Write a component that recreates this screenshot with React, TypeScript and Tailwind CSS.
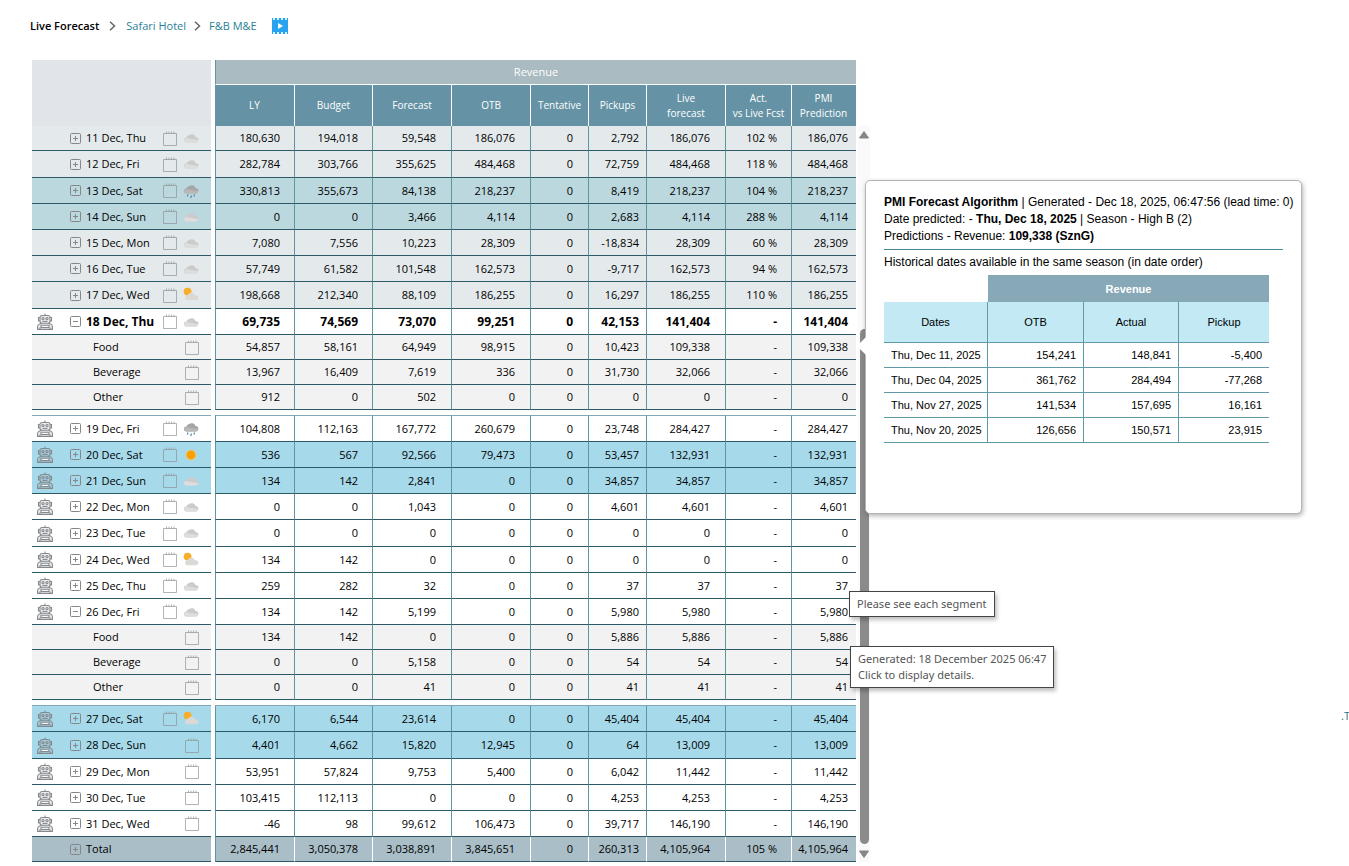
import React from "react";

type Kind = "past" | "pastWeekend" | "today" | "future" | "weekend" | "segment" | "total";
type Weather = "cloud" | "rain" | "sun" | "partly";

interface Row {
  label: string;
  kind: Kind;
  height: string;
  values: string[];
  weather?: Weather;
  robot?: boolean;
  open?: boolean;
  afterGap?: boolean;
}

const REGULAR = "h-[26px]";
const TALL = "h-[27px]";
const SHORT = "h-[25px]";

const sections: Row[][] = [
  [
    { label: "11 Dec, Thu", kind: "past", height: SHORT, weather: "cloud", values: ["180,630", "194,018", "59,548", "186,076", "0", "2,792", "186,076", "102 %", "186,076"] },
    { label: "12 Dec, Fri", kind: "past", height: TALL, weather: "cloud", values: ["282,784", "303,766", "355,625", "484,468", "0", "72,759", "484,468", "118 %", "484,468"] },
    { label: "13 Dec, Sat", kind: "pastWeekend", height: REGULAR, weather: "rain", values: ["330,813", "355,673", "84,138", "218,237", "0", "8,419", "218,237", "104 %", "218,237"] },
    { label: "14 Dec, Sun", kind: "pastWeekend", height: REGULAR, weather: "cloud", values: ["0", "0", "3,466", "4,114", "0", "2,683", "4,114", "288 %", "4,114"] },
    { label: "15 Dec, Mon", kind: "past", height: REGULAR, weather: "cloud", values: ["7,080", "7,556", "10,223", "28,309", "0", "-18,834", "28,309", "60 %", "28,309"] },
    { label: "16 Dec, Tue", kind: "past", height: REGULAR, weather: "cloud", values: ["57,749", "61,582", "101,548", "162,573", "0", "-9,717", "162,573", "94 %", "162,573"] },
    { label: "17 Dec, Wed", kind: "past", height: TALL, weather: "partly", values: ["198,668", "212,340", "88,109", "186,255", "0", "16,297", "186,255", "110 %", "186,255"] },
    { label: "18 Dec, Thu", kind: "today", height: REGULAR, weather: "cloud", robot: true, open: true, values: ["69,735", "74,569", "73,070", "99,251", "0", "42,153", "141,404", "-", "141,404"] },
    { label: "Food", kind: "segment", height: SHORT, values: ["54,857", "58,161", "64,949", "98,915", "0", "10,423", "109,338", "-", "109,338"] },
    { label: "Beverage", kind: "segment", height: SHORT, values: ["13,967", "16,409", "7,619", "336", "0", "31,730", "32,066", "-", "32,066"] },
    { label: "Other", kind: "segment", height: SHORT, values: ["912", "0", "502", "0", "0", "0", "0", "-", "0"] },
  ],
  [
    { label: "19 Dec, Fri", kind: "future", height: TALL, afterGap: true, weather: "rain", robot: true, values: ["104,808", "112,163", "167,772", "260,679", "0", "23,748", "284,427", "-", "284,427"] },
    { label: "20 Dec, Sat", kind: "weekend", height: REGULAR, weather: "sun", robot: true, values: ["536", "567", "92,566", "79,473", "0", "53,457", "132,931", "-", "132,931"] },
    { label: "21 Dec, Sun", kind: "weekend", height: REGULAR, weather: "cloud", robot: true, values: ["134", "142", "2,841", "0", "0", "34,857", "34,857", "-", "34,857"] },
    { label: "22 Dec, Mon", kind: "future", height: REGULAR, weather: "cloud", robot: true, values: ["0", "0", "1,043", "0", "0", "4,601", "4,601", "-", "4,601"] },
    { label: "23 Dec, Tue", kind: "future", height: TALL, weather: "cloud", robot: true, values: ["0", "0", "0", "0", "0", "0", "0", "-", "0"] },
    { label: "24 Dec, Wed", kind: "future", height: REGULAR, weather: "partly", robot: true, values: ["134", "142", "0", "0", "0", "0", "0", "-", "0"] },
    { label: "25 Dec, Thu", kind: "future", height: REGULAR, weather: "cloud", robot: true, values: ["259", "282", "32", "0", "0", "37", "37", "-", "37"] },
    { label: "26 Dec, Fri", kind: "future", height: REGULAR, weather: "cloud", robot: true, open: true, values: ["134", "142", "5,199", "0", "0", "5,980", "5,980", "-", "5,980"] },
    { label: "Food", kind: "segment", height: SHORT, values: ["134", "142", "0", "0", "0", "5,886", "5,886", "-", "5,886"] },
    { label: "Beverage", kind: "segment", height: SHORT, values: ["0", "0", "5,158", "0", "0", "54", "54", "-", "54"] },
    { label: "Other", kind: "segment", height: SHORT, values: ["0", "0", "41", "0", "0", "41", "41", "-", "41"] },
  ],
  [
    { label: "27 Dec, Sat", kind: "weekend", height: TALL, afterGap: true, weather: "partly", robot: true, values: ["6,170", "6,544", "23,614", "0", "0", "45,404", "45,404", "-", "45,404"] },
    { label: "28 Dec, Sun", kind: "weekend", height: TALL, robot: true, values: ["4,401", "4,662", "15,820", "12,945", "0", "64", "13,009", "-", "13,009"] },
    { label: "29 Dec, Mon", kind: "future", height: REGULAR, robot: true, values: ["53,951", "57,824", "9,753", "5,400", "0", "6,042", "11,442", "-", "11,442"] },
    { label: "30 Dec, Tue", kind: "future", height: REGULAR, robot: true, values: ["103,415", "112,113", "0", "0", "0", "4,253", "4,253", "-", "4,253"] },
    { label: "31 Dec, Wed", kind: "future", height: REGULAR, robot: true, values: ["-46", "98", "99,612", "106,473", "0", "39,717", "146,190", "-", "146,190"] },
    { label: "Total", kind: "total", height: SHORT, values: ["2,845,441", "3,050,378", "3,038,891", "3,845,651", "0", "260,313", "4,105,964", "105 %", "4,105,964"] },
  ],
];

const background: Record<Kind, string> = {
  past: "bg-[#e4eaec]",
  pastWeekend: "bg-[#bcd8df]",
  today: "bg-white text-[12px] font-bold",
  future: "bg-white",
  weekend: "bg-[#a6daeb]",
  segment: "bg-[#f2f2f2]",
  total: "bg-[#a9bec7]",
};

const columns: { title: string[]; width: string; pad: string }[] = [
  { title: ["LY"], width: "w-[80px]", pad: "pr-[14px]" },
  { title: ["Budget"], width: "w-[78px]", pad: "pr-[14px]" },
  { title: ["Forecast"], width: "w-[79px]", pad: "pr-[15px]" },
  { title: ["OTB"], width: "w-[79px]", pad: "pr-[15px]" },
  { title: ["Tentative"], width: "w-[58px]", pad: "pr-[15px]" },
  { title: ["Pickups"], width: "w-[58px]", pad: "pr-[7px]" },
  { title: ["Live", "forecast"], width: "w-[79px]", pad: "pr-[15px]" },
  { title: ["Act.", "vs Live Fcst"], width: "w-[66px]", pad: "pr-[14px]" },
  { title: ["PMI", "Prediction"], width: "w-[64px]", pad: "pr-2" },
];

function Robot() {
  return (
    <svg className="h-[17px] w-4 shrink-0" viewBox="0 0 16 17" fill="none" stroke="#85898d" strokeWidth="1.100">
      <path d="M8 2.800V.5" />
      <path d="M5 2.500h6a2 2 0 0 1 2 2v3.700a2 2 0 0 1-2 2H5a2 2 0 0 1-2-2V4.500a2 2 0 0 1 2-2z" fill="#85898d" fillOpacity=".15" />
      <path d="M2.800 4.500H1.500v3.400h1.300M13.200 4.500h1.300v3.400h-1.300" />
      <circle cx="6" cy="5.600" r="1.100" />
      <circle cx="10" cy="5.600" r="1.100" />
      <path d="M5.500 8.400h5" />
      <path d="M4.500 10.300 2.600 10.900Q.6 11.600.6 13.500v2.900h14.800v-2.900q0-1.900-2-2.600l-1.900-.6" fill="#85898d" fillOpacity=".15" />
      <path d="M4 12.300h8v2.200H4z" fill="#f4f5f5" />
      <path d="M3 14.500v1.800M13 14.500v1.800" />
    </svg>
  );
}

function Calendar() {
  return (
    <svg className="h-[15px] w-[14px] shrink-0" viewBox="0 0 14 15" fill="none" stroke="#8c9092" strokeOpacity=".68">
      <path d="M.5 2.500h13v12H.5z" />
      <path d="M3.500.5v2M6 .5v2M8.500.5v2M11 .5v2" />
    </svg>
  );
}

function Cloud({ dark = false }: { dark?: boolean }) {
  return (
    <g>
      <path
        d="M3.200 12.500A2.700 2.700 0 0 1 .8 9.900 2.600 2.600 0 0 1 3.500 7.500 3.300 3.300 0 0 1 6.100 5.100 4 4 0 0 1 12.500 7 2.900 2.900 0 0 1 15.400 9.800 2.700 2.700 0 0 1 12.900 12.500z"
        fill={dark ? "#a6a5a7" : "#cbcbcc"}
      />
      <path
        d="M3.200 12.500A2.600 2.600 0 0 1 .8 10 2.400 2.400 0 0 1 3.500 8.200Q5.500 7.600 6.800 9.300 9.500 8.200 11 9.800 13.200 9 15.300 10.400A2.700 2.700 0 0 1 12.900 12.500z"
        fill={dark ? "#b9b7b8" : "#dedddd"}
      />
    </g>
  );
}

function WeatherIcon({ type }: { type: Weather }) {
  return (
    <svg className="h-4 w-4 shrink-0" viewBox="0 0 16 16">
      {type === "sun" && (
        <>
          <circle cx="8" cy="8" r="5.600" fill="#fbc65a" opacity=".6" />
          <circle cx="8" cy="8" r="4.400" fill="#f9a000" />
        </>
      )}
      {type === "partly" && (
        <>
          <circle cx="4.600" cy="4.600" r="3.900" fill="#f8ae28" />
          <path d="M4 13.200A2.300 2.300 0 0 1 2.600 9.500 2.500 2.500 0 0 1 4.800 8.100 2.900 2.900 0 0 1 7.500 6 3.600 3.600 0 0 1 11.900 8.500 2.600 2.600 0 0 1 15.400 11a2.300 2.300 0 0 1-2.200 2.200z" fill="#dad9d6" />
        </>
      )}
      {type === "cloud" && <Cloud />}
      {type === "rain" && (
        <>
          <g transform="translate(0 -2)">
            <Cloud dark />
          </g>
          <path d="M5 11.500l-.6 2M8.500 12.500l-.8 2.500M11.500 11.500l-.6 2" stroke="#5b87a8" strokeWidth="1.200" />
        </>
      )}
    </svg>
  );
}

function Toggle({ open, label }: { open?: boolean; label: string }) {
  return (
    <button type="button" aria-expanded={!!open} aria-label={label} className="h-[11px] w-[11px] shrink-0">
      <svg viewBox="0 0 11 11" className="block h-[11px] w-[11px]" fill="none" stroke="#858789">
        <rect x=".5" y=".5" width="10" height="10" rx="1" />
        <path d={open ? "M3 5.500h5" : "M3 5.500h5M5.500 3v5"} />
      </svg>
    </button>
  );
}

function RowLabel({ row }: { row: Row }) {
  if (row.kind === "segment") {
    return (
      <div className="flex items-center justify-between pr-3 pl-[61px]">
        <span>{row.label}</span>
        <Calendar />
      </div>
    );
  }
  return (
    <div className="flex items-center pr-3 pl-[5px]">
      <span className="flex w-[33px]">{row.robot && <Robot />}</span>
      <Toggle open={row.open} label={row.label} />
      <span className="grow pl-[5px] whitespace-nowrap">{row.label}</span>
      {row.kind !== "total" && (
        <span className="flex items-center gap-[6px]">
          <Calendar />
          {row.weather && <WeatherIcon type={row.weather} />}
        </span>
      )}
    </div>
  );
}

function ForecastTable() {
  return (
    <table className="w-[824px] table-fixed border-separate border-spacing-0 text-[11px] leading-4 text-black">
      <colgroup>
        <col className="w-[179px]" />
        <col className="w-1" />
        {columns.map((c) => (
          <col key={c.title[0]} className={c.width} />
        ))}
      </colgroup>
      <thead className="text-white">
        <tr>
          <td rowSpan={2} className="bg-[#e1e5e9]" />
          <td rowSpan={2} />
          <th colSpan={9} className="h-[25px] border-b border-l border-b-white border-l-[#6593a4] bg-[#aabbc1] font-normal">
            Revenue
          </th>
        </tr>
        <tr>
          {columns.map((c, i) => (
            <th key={c.title[0]} className={`h-[41px] border-r bg-[#6593a5] text-[10px] leading-[15px] font-normal whitespace-nowrap ${i === 8 ? "border-[#6593a5]" : "border-white"}`}>
              {c.title.map((t) => (
                <div key={t}>{t}</div>
              ))}
            </th>
          ))}
        </tr>
      </thead>
      {sections.map((rows, s) => (
        <tbody key={s}>
          {s > 0 && (
            <tr>
              <td colSpan={11} className="h-[5px]" />
            </tr>
          )}
          {rows.map((row) => {
            const edge = `border-b border-b-[#2d5866] ${row.afterGap ? "border-t border-t-[#7fa9b3]" : ""} ${background[row.kind]}`;
            return (
              <tr key={row.label}>
                <th className={`${row.height} p-0 text-left ${edge} ${row.kind === "today" ? "" : "font-normal"}`}>
                  <RowLabel row={row} />
                </th>
                <td />
                {row.values.map((v, i) => (
                  <td
                    key={i}
                    className={`${edge} ${columns[i].pad} py-0 pl-0 text-right whitespace-nowrap ${i === 0 ? "border-l border-l-[#5f979f]" : ""} ${i < 8 ? "border-r" : ""} ${row.kind === "total" ? "border-r-white" : "border-r-[#5f979f]"}`}
                  >
                    {v}
                  </td>
                ))}
              </tr>
            );
          })}
        </tbody>
      ))}
    </table>
  );
}

const history = [
  ["Thu, Dec 11, 2025", "154,241", "148,841", "-5,400"],
  ["Thu, Dec 04, 2025", "361,762", "284,494", "-77,268"],
  ["Thu, Nov 27, 2025", "141,534", "157,695", "16,161"],
  ["Thu, Nov 20, 2025", "126,656", "150,571", "23,915"],
];

function PredictionPopup() {
  return (
    <section className="absolute top-[180px] left-[865px] h-[334px] w-[437px] rounded-[5px] border border-[#b4b4b4] bg-white px-[18px] pt-[13px] font-['Liberation_Sans',sans-serif] text-black shadow-[1px_2px_5px_rgba(0,0,0,0.3)]">
      <svg className="absolute top-[155px] -left-[9px] h-5 w-[10px]" viewBox="0 0 10 20">
        <path d="M10 0 0 10l10 10z" fill="#fff" />
      </svg>
      <div className="border-b border-[#4a8898] pb-1 text-[12px] leading-[17px] whitespace-nowrap">
        <p>
          <b>PMI Forecast Algorithm</b> | Generated - Dec 18, 2025, 06:47:56 (lead time: 0)
        </p>
        <p>
          Date predicted: - <b>Thu, Dec 18, 2025</b> | Season - High B (2)
        </p>
        <p>
          Predictions - Revenue: <b>109,338 (SznG)</b>
        </p>
      </div>
      <p className="pt-1 pb-[5px] text-[12px] leading-4">Historical dates available in the same season (in date order)</p>
      <table className="w-[385px] table-fixed border-separate border-spacing-0 text-[11px] leading-4">
        <colgroup>
          <col className="w-[104px]" />
          <col className="w-[96px]" />
          <col className="w-[95px]" />
          <col className="w-[90px]" />
        </colgroup>
        <thead>
          <tr>
            <td />
            <th colSpan={3} className="h-[27px] bg-[#87a9b7] p-0 text-white">
              Revenue
            </th>
          </tr>
          <tr>
            {["Dates", "OTB", "Actual", "Pickup"].map((h, i) => (
              <th key={h} className={`h-[41px] border-b border-[#5f9aa6] bg-[#c2e9f4] p-0 font-normal ${i < 3 ? "border-r" : ""}`}>
                {h}
              </th>
            ))}
          </tr>
        </thead>
        <tbody>
          {history.map((r) => (
            <tr key={r[0]}>
              {r.map((v, i) => (
                <td key={i} className={`h-[25px] border-b border-[#5f9aa6] px-[7px] py-0 whitespace-nowrap ${i < 3 ? "border-r" : ""} ${i > 0 ? "text-right" : ""}`}>
                  {v}
                </td>
              ))}
            </tr>
          ))}
        </tbody>
      </table>
    </section>
  );
}

function Chevron() {
  return (
    <svg className="h-[10px] w-[7px]" viewBox="0 0 7 10" fill="none" stroke="#666" strokeWidth="1.500">
      <path d="M1 .8 5.500 5 1 9.200" />
    </svg>
  );
}

export default function App() {
  return (
    <main className="relative overflow-hidden bg-white pb-1 pl-8 font-['Open_Sans','Noto_Sans',sans-serif]">
      <nav className="-ml-[2px] flex h-[60px] items-center pb-2 text-[11px]">
        <span className="font-semibold text-black">Live Forecast</span>
        <span className="px-[10px]"><Chevron /></span>
        <a href="#hotel" className="text-[#2a8197]">Safari Hotel</a>
        <span className="px-2"><Chevron /></span>
        <a href="#department" className="text-[#2a8197]">F&amp;B M&amp;E</a>
        <button type="button" aria-label="Video" className="ml-[15px]">
          <svg className="block h-4 w-4" viewBox="0 0 16 16">
            <path d="M0 0h16v16H0z" fill="#27a3f0" />
            <path d="M1 0h2v2H1zM5 0h2v2H5zM9 0h2v2H9zM13 0h2v2h-2zM1 14h2v2H1zM5 14h2v2H5zM9 14h2v2H9zM13 14h2v2h-2z" fill="#d5effd" />
            <path d="M6 5l5 3-5 3z" fill="#fff" />
          </svg>
        </button>
      </nav>

      <div className="flex">
        <ForecastTable />
        <div className="ml-[2px] flex w-3 flex-col items-center bg-[#fafafa] bg-clip-content pt-[66px]">
          <svg className="mt-[5px] h-2 w-[10px] shrink-0" viewBox="0 0 10 8">
            <path d="M5 .5 9.500 7h-9z" fill="#878787" stroke="#878787" strokeLinejoin="round" />
          </svg>
          <div className="mt-[190px] mb-[6px] w-[9px] grow rounded-full bg-[#8b8b8b]" />
          <svg className="mb-1 h-2 w-[10px] shrink-0" viewBox="0 0 10 8">
            <path d="M5 7.500 9.500 1h-9z" fill="#878787" stroke="#878787" strokeLinejoin="round" />
          </svg>
        </div>
      </div>

      <PredictionPopup />

      <div role="tooltip" className="absolute top-[591px] left-[849px] border border-[#444] bg-white px-[7px] py-1 font-['Noto_Sans',sans-serif] text-[11px] leading-4 text-[#555] shadow-[2px_3px_4px_rgba(0,0,0,0.25)]">
        Please see each segment
      </div>
      <div role="tooltip" className="absolute top-[646px] left-[850px] border border-[#444] bg-white px-[7px] py-1 font-['Noto_Sans',sans-serif] text-[11px] leading-4 whitespace-nowrap text-[#555] shadow-[2px_3px_4px_rgba(0,0,0,0.25)]">
        Generated: 18 December 2025 06:47
        <br />
        Click to display details.
      </div>

      <a href="#top" className="absolute top-[708px] right-0 w-2 overflow-hidden text-[11px] leading-4 text-[#2a7386]">
        .T
      </a>
    </main>
  );
}
